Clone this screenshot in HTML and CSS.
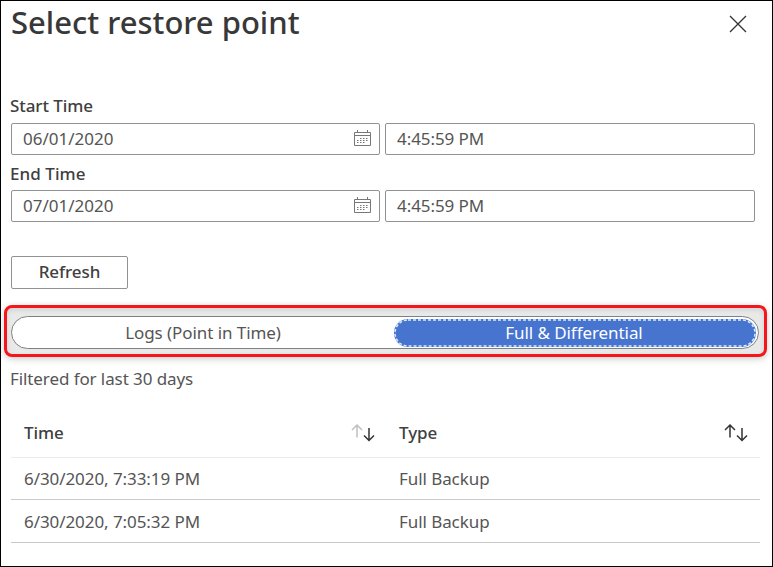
FILE: index.html
```html
<!DOCTYPE html>
<html lang="en">
<head>
<meta charset="utf-8">
<title>Select restore point</title>
<link rel="stylesheet" href="styles.css">
</head>
<body>
<main class="panel">
  <header class="head">
    <h1><span>Select restore point</span></h1>
    <button class="close" aria-label="Close"><svg width="18" height="18" viewBox="0 0 18 18"><path d="M1 1 17 17M17 1 1 17"/></svg></button>
  </header>
  <label class="label start"><span>Start Time</span></label>
  <div class="fields">
    <div class="input"><span class="date">06/01/2020</span><svg class="cal" width="17" height="17" viewBox="0 0 17 17"><path d="M.5 2.500h16v13H.5zM.5 5.500h16M3.500 0v3M13.500 0v3"/><path class="dots" d="M6 8.500h9M3 10.500h12M3 12.500h9"/></svg></div>
    <div class="input"><span class="clock">4:45:59 PM</span></div>
  </div>
  <label class="label end"><span>End Time</span></label>
  <div class="fields">
    <div class="input"><span class="date">07/01/2020</span><svg class="cal" width="17" height="17" viewBox="0 0 17 17"><path d="M.5 2.500h16v13H.5zM.5 5.500h16M3.500 0v3M13.500 0v3"/><path class="dots" d="M6 8.500h9M3 10.500h12M3 12.500h9"/></svg></div>
    <div class="input"><span class="clock">4:45:59 PM</span></div>
  </div>
  <button class="refresh"><span>Refresh</span></button>
  <section class="highlight">
    <div class="pill">
      <div class="option"><span>Logs (Point in Time)</span></div>
      <div class="option selected"><span>Full &amp; Differential</span><svg class="focus" width="362" height="28"><rect x="1" y="1" width="360" height="26" rx="13"/></svg></div>
    </div>
  </section>
  <p class="note"><span>Filtered for last 30 days</span></p>
  <div class="table">
    <div class="row thead">
      <div class="cell"><span class="th-time">Time</span><svg class="sort" width="24" height="20" viewBox="0 0 24 20"><path class="faint" d="M6 14.500V2M1 7 6 2l5 5"/><path d="M18 5v12.500M13 12.500l5 5 5-5"/></svg></div>
      <div class="cell"><span class="th-type">Type</span><svg class="sort" width="24" height="20" viewBox="0 0 24 20"><path d="M6 14.500V2M1 7 6 2l5 5"/><path d="M18 5v12.500M13 12.500l5 5 5-5"/></svg></div>
    </div>
    <div class="row"><div class="cell"><span class="stamp">6/30/2020, 7:33:19 PM</span></div><div class="cell"><span class="kind">Full Backup</span></div></div>
    <div class="row last"><div class="cell"><span class="stamp">6/30/2020, 7:05:32 PM</span></div><div class="cell"><span class="kind">Full Backup</span></div></div>
  </div>
</main>
</body>
</html>
```
FILE: styles.css
```css
* { box-sizing: border-box; }
body {
  margin: 0;
  background: #fff;
  color: #555;
  font: 17px/22px "Noto Sans", "Open Sans", sans-serif;
  letter-spacing: -.07px;
}
button { font: inherit; letter-spacing: inherit; color: inherit; background: none; padding: 0; }
svg { display: block; fill: none; stroke: #333; }
.panel {
  width: 773px;
  height: 567px;
  border: 1px solid #000;
  padding: 0 12px 0 10px;
  overflow: hidden;
}
.head { display: flex; justify-content: space-between; height: 94px; }
h1 { margin: 0; font-size: 31px; line-height: 42px; font-weight: 550; color: #383838; letter-spacing: 0; }
.close { border: 0; width: 18px; height: 18px; margin: 14px 13px 0 0; }
.close svg { stroke-width: 1.300; }
.label { display: block; font-weight: 500; height: 28px; line-height: 22px; color: #404040; }
.label span { margin-left: -1px; }
.end { margin-top: 8px; height: 27px; }
.end span { letter-spacing: .05px; }
.fields { display: grid; grid-template-columns: 369px 370px; gap: 5px; }
.input {
  display: flex;
  align-items: center;
  justify-content: space-between;
  height: 32px;
  border: 1px solid #929292;
  border-radius: 2px;
  padding: 0 8px 0 11px;
}
.date { letter-spacing: 0; }
.cal { stroke: #777; margin-top: -2px; }
.dots { stroke-dasharray: 1.500 1.500; }
.refresh {
  display: block;
  width: 117px;
  height: 33px;
  margin-top: 34px;
  border: 1px solid #929292;
  border-radius: 2px;
  font-weight: 500;
  color: #404040;
}
.refresh span { position: relative; top: -1px; }
.highlight {
  width: 763px;
  height: 52px;
  margin: 16px 0 0 -7px;
  padding: 8px 4px;
  border: 3px solid #f4161b;
  border-radius: 8px;
  background: #e9e9e9;
  box-shadow: 0 2px 7px rgba(0,0,0,.2), inset 0 2px 5px rgba(0,0,0,.1);
}
.pill {
  display: flex;
  width: 748px;
  height: 33px;
  border: 1px solid #808080;
  border-radius: 17px;
  background: #fff;
  padding: 2px;
}
.option { width: 380px; text-align: center; line-height: 28px; }
.option span { margin-right: 2px; }
.selected {
  width: 362px;
  height: 28px;
  border-radius: 14px;
  background: #4674cf;
  color: #fff;
  position: relative;
}
.focus { position: absolute; inset: 0; stroke: #d8ecff; stroke-width: 1.500; stroke-dasharray: 3 2; }
.note { margin: 11px 0 0 -1px; line-height: 22px; letter-spacing: -.09px; }
.table { width: 749px; margin-top: 19px; }
.row { display: grid; grid-template-columns: 375px 374px; height: 42px; border-bottom: 1px solid #cacaca; }
.last { height: 43px; }
.last .cell { padding-top: 1px; }
.thead { height: 49px; border-color: #ececec; font-weight: 500; color: #404040; }
.cell { display: flex; align-items: center; justify-content: space-between; padding: 0 12px 0 13px; }
.cell:first-child { padding-right: 11px; }
.sort { stroke-width: 1.500; }
.faint { stroke: #c0c0c0; }
```
